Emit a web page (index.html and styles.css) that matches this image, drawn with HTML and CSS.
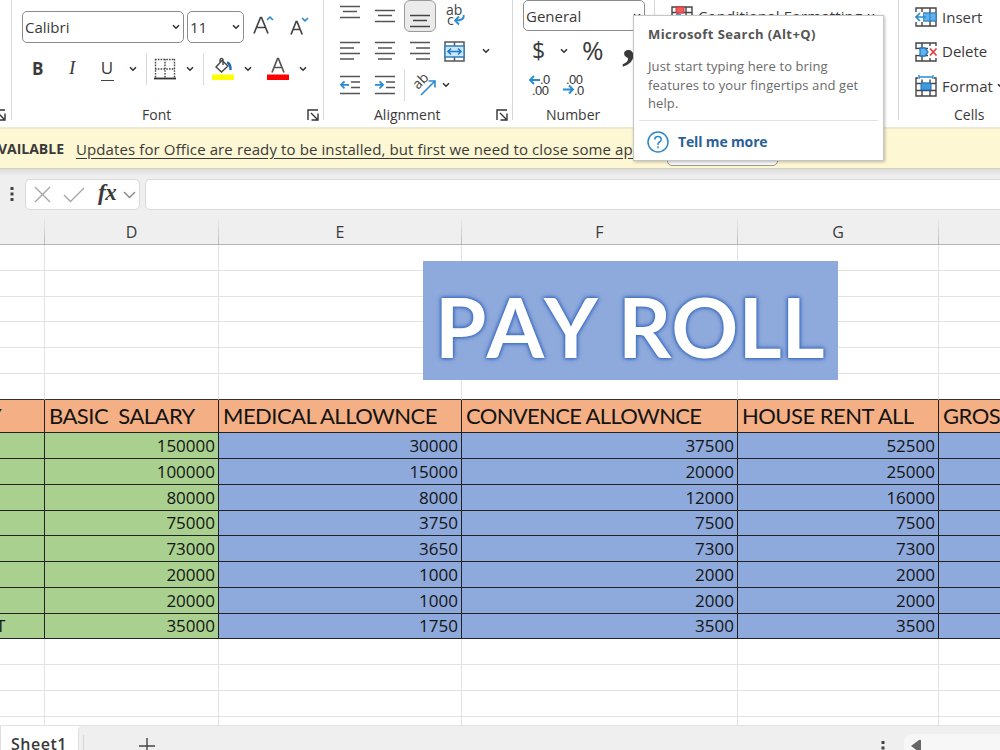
FILE: index.html
```html
<!DOCTYPE html>
<html lang="en">
<head>
<meta charset="utf-8">
<title>Payroll</title>
<link rel="stylesheet" href="styles.css">
</head>
<body>
<svg width="0" height="0" class="defs">
  <symbol id="chev" viewBox="0 0 8 6"><path d="M1 1.2 4 4.2 7 1.2" fill="none" stroke="#333" stroke-width="1.6"/></symbol>
  <symbol id="launch" viewBox="0 0 12 12"><path d="M1 11V1H11M4 4 10 10M11 4.500V11H4.500" fill="none" stroke="#333" stroke-width="1.400"/></symbol>
  <symbol id="cells" viewBox="0 0 22 20"><path d="M1 1H21V19H1ZM1 6.500H21M1 13.500H21M7 1V19M15 1V19" fill="#fff" stroke="#444" stroke-width="1.400"/></symbol>
</svg>
<div class="app">
  <header class="ribbon">
    <section class="group clip">
      <svg class="launcher"><use href="#launch"/></svg>
    </section>
    <section class="group font">
      <div class="row font-top">
        <div class="select family"><span>Calibri</span><svg class="chev"><use href="#chev"/></svg></div>
        <div class="select size"><span>11</span><svg class="chev"><use href="#chev"/></svg></div>
        <svg class="grow" width="22" height="20" viewBox="0 0 22 20"><path d="M1 18.500 7.500 2.500H8.500L15 18.500M3.500 12.500H12.500" fill="none" stroke="#444" stroke-width="1.700"/><path d="M14 5 17 2.200 20 5" fill="none" stroke="#2b8bd0" stroke-width="1.600"/></svg>
        <svg class="shrink" width="20" height="20" viewBox="0 0 20 20"><path d="M1 18.500 6.200 5.500H7L12.200 18.500M3 13.500H10.200" fill="none" stroke="#444" stroke-width="1.700"/><path d="M12 2 15 4.800 18 2" fill="none" stroke="#2b8bd0" stroke-width="1.600"/></svg>
      </div>
      <div class="row font-mid">
        <b class="bold">B</b>
        <i class="italic">I</i>
        <span class="under">U</span>
        <svg class="chev c1"><use href="#chev"/></svg>
        <span class="split s1"></span>
        <svg class="border-ic" width="22" height="22" viewBox="0 0 22 22"><path d="M1 1.500H21M1 11H21M1.500 1V20M11 1V20M20.500 1V20" fill="none" stroke="#444" stroke-width="1.400" stroke-dasharray="1.600 1.200"/><path d="M0 20.500H22" stroke="#333" stroke-width="1.800"/></svg>
        <svg class="chev c2"><use href="#chev"/></svg>
        <span class="split s2"></span>
        <svg class="fill-ic" width="22" height="24" viewBox="0 0 22 24"><path d="M10 3.500 16 9 9.500 15 4 10ZM8 6V3Q9 0 11 2.500V8" fill="none" stroke="#444" stroke-width="1.400"/><path d="M15 5.500Q18.800 6.500 18.500 13" fill="none" stroke="#1c6fb5" stroke-width="2.400"/><path d="M0 17.500H22V23H0Z" fill="#ff0"/></svg>
        <svg class="chev c3"><use href="#chev"/></svg>
        <svg class="color-ic" width="22" height="24" viewBox="0 0 22 24"><path d="M5 15.500 10.600 1.500H11.400L17 15.500M7 10.500H15" fill="none" stroke="#555" stroke-width="1.700"/><path d="M0 17.500H22V23H0Z" fill="#f00"/></svg>
        <svg class="chev c4"><use href="#chev"/></svg>
      </div>
      <div class="caption"><span class="cap-font">Font</span><svg class="launcher"><use href="#launch"/></svg></div>
    </section>
    <section class="group align">
      <div class="row align-top">
        <svg width="20" height="32" viewBox="0 0 20 32"><path d="M0 6.500H20M3 11.500H17M0 17.500H20" stroke="#555" stroke-width="1.500"/></svg>
        <svg width="20" height="32" viewBox="0 0 20 32"><path d="M0 10.500H20M3 15.500H17M0 21.500H20" stroke="#555" stroke-width="1.500"/></svg>
        <span class="pressed"><svg width="20" height="30" viewBox="0 0 20 30"><path d="M0 14.500H20M3 19.500H17M0 25.500H20" stroke="#444" stroke-width="1.500"/></svg></span>
        <svg class="wrap" width="22" height="26" viewBox="0 0 22 26"><text x="1" y="13" class="ab">ab</text><text x="2" y="23" class="ab">c</text><path d="M18.500 13Q20 18.500 10 18.500M14 14.500 10 18.500 14 22.500" fill="none" stroke="#2b8bd0" stroke-width="1.800"/></svg>
      </div>
      <div class="row align-mid">
        <svg width="20" height="20" viewBox="0 0 20 20"><path d="M0 1.500H20M0 7H14M0 12.500H20M0 18H14" stroke="#555" stroke-width="1.500"/></svg>
        <svg width="20" height="20" viewBox="0 0 20 20"><path d="M0 1.500H20M3 7H17M0 12.500H20M3 18H17" stroke="#555" stroke-width="1.500"/></svg>
        <svg width="20" height="20" viewBox="0 0 20 20"><path d="M0 1.500H20M6 7H20M0 12.500H20M6 18H20" stroke="#555" stroke-width="1.500"/></svg>
        <svg class="merge" width="21" height="21" viewBox="0 0 21 21"><path d="M1 1H20V20H1ZM10.500 1V5M10.500 16V20" fill="#fff" stroke="#555" stroke-width="1.500"/><path d="M1 5H20V16H1Z" fill="#cfe6f8" stroke="#2b7fc0" stroke-width="1.300"/><path d="M3.500 10.500H17.500M7 7.500 4 10.500 7 13.500M14 7.500 17 10.500 14 13.500" fill="none" stroke="#1f7cc4" stroke-width="1.600"/></svg>
        <svg class="chev"><use href="#chev"/></svg>
      </div>
      <div class="row align-low">
        <svg width="20" height="20" viewBox="0 0 20 20"><path d="M0 1.500H20M11 7H20M11 12.500H20M0 18.500H20" stroke="#555" stroke-width="1.500"/><path d="M1 9.800H9M4.500 6.300 1 9.800 4.500 13.300" fill="none" stroke="#2b8bd0" stroke-width="1.800"/></svg>
        <svg width="20" height="20" viewBox="0 0 20 20"><path d="M0 1.500H20M11 7H20M11 12.500H20M0 18.500H20" stroke="#555" stroke-width="1.500"/><path d="M0 9.800H8M4.500 6.300 8 9.800 4.500 13.300" fill="none" stroke="#2b8bd0" stroke-width="1.800"/></svg>
        <span class="split"></span>
        <svg class="orient" width="24" height="24" viewBox="0 0 24 24"><text x="5" y="17" class="ab" transform="rotate(-45 5 17)">ab</text><path d="M8 22 22 8M15.500 8H22V14.500" fill="none" stroke="#2b8bd0" stroke-width="1.600"/></svg>
        <svg class="chev"><use href="#chev"/></svg>
      </div>
      <div class="caption"><span class="cap-align">Alignment</span><svg class="launcher"><use href="#launch"/></svg></div>
    </section>
    <section class="group number">
      <div class="select general"><span>General</span><svg class="chev"><use href="#chev"/></svg></div>
      <div class="row num-mid">
        <span class="dollar">$</span><svg class="chev"><use href="#chev"/></svg><span class="percent">%</span><b class="comma">,</b>
      </div>
      <div class="row num-low">
        <svg width="22" height="23" viewBox="0 0 22 23"><text x="11" y="10" class="dec">.0</text><text x="3" y="21" class="dec">.00</text><path d="M1 6H11M5 2 1 6 5 10" fill="none" stroke="#2b8bd0" stroke-width="1.900"/></svg>
        <svg width="22" height="23" viewBox="0 0 22 23"><text x="3" y="10" class="dec">.00</text><text x="11" y="21" class="dec">.0</text><path d="M0 15.500H10M6 11.500 10 15.500 6 19.500" fill="none" stroke="#2b8bd0" stroke-width="1.900"/></svg>
      </div>
      <div class="caption"><span class="cap-num">Number</span></div>
    </section>
    <section class="group styles">
      <svg class="cf" width="22" height="20" viewBox="0 0 22 20"><use href="#cells"/><path d="M5 1H13V7H5Z" fill="#f25b5b" stroke="#d13438"/><path d="M5 8H10V13H5Z" fill="#4da0e0"/></svg>
      <span class="cf-text">Conditional Formatting</span><svg class="chev"><use href="#chev"/></svg>
    </section>
    <section class="group cellgroup">
      <div class="cmd"><svg width="22" height="20" viewBox="0 0 22 20"><use href="#cells"/><path d="M8 6H21V14H8Z" fill="#62b1ee" stroke="#1f7cc4"/><path d="M15 6V14" stroke="#1f7cc4"/><path d="M0 5H8V15H0Z" fill="#fff"/><path d="M1 10H11M5 6 1 10 5 14" fill="none" stroke="#2b8bd0" stroke-width="1.700"/></svg><span>Insert</span></div>
      <div class="cmd"><svg width="22" height="20" viewBox="0 0 22 20"><use href="#cells"/><path d="M13 4H22V16H13ZM0 7.300H4V12.700H0Z" fill="#fff"/><path d="M5 6H10L13 10 10 14H5Z" fill="#62b1ee" stroke="#1f7cc4" stroke-width="1.300"/><path d="M15 6.500 21.500 13.500M21.500 6.500 15 13.500" stroke="#e0393e" stroke-width="1.700"/></svg><span>Delete</span></div>
      <div class="cmd"><svg width="22" height="22" viewBox="0 0 22 22"><use href="#cells" y="2" height="20"/><path d="M3 0H19V4.500H3Z" fill="#fff"/><path d="M4 2H18M4 0V4M18 0V4" stroke="#2b8bd0" stroke-width="1.300"/><path d="M6 8H16V15H6Z" fill="#3f9be0" stroke="#1f6cb0"/></svg><span class="t-format">Format</span><svg class="chev"><use href="#chev"/></svg></div>
      <div class="caption"><span class="cap-cells">Cells</span></div>
    </section>
  </header>
  <div class="notice">
    <b>VAILABLE</b><span class="update">Updates for Office are ready to be installed, but first we need to close some app</span>
    <span class="notice-btn"></span>
  </div>
  <div class="formula">
    <svg class="dots" width="4" height="16" viewBox="0 0 4 16"><path d="M.5 1h3v3h-3zM.5 6.500h3v3h-3zM.5 12h3v3h-3z" fill="#444"/></svg>
    <div class="fx-box">
      <svg width="17" height="17" viewBox="0 0 17 17"><path d="M1 1 16 16M16 1 1 16" stroke="#a6a6a6" stroke-width="1.400"/></svg>
      <svg class="tick" width="22" height="16" viewBox="0 0 22 16"><path d="M1 8 7.500 14.500 21 1" fill="none" stroke="#a6a6a6" stroke-width="1.400"/></svg>
      <i class="fx">fx</i>
      <svg class="fxchev" width="13" height="8" viewBox="0 0 13 8"><path d="M1 1 6.500 6.500 12 1" fill="none" stroke="#888" stroke-width="1.400"/></svg>
    </div>
    <div class="fx-input"></div>
  </div>
  <div class="colhead"><span></span><span>D</span><span>E</span><span>F</span><span>G</span><span></span></div>
  <main class="sheet">
    <i></i><i></i><i></i><i></i><i></i><i class="last"></i>
    <i></i><i></i><i></i><i></i><i></i><i class="last"></i>
    <i></i><i></i><i></i><i></i><i></i><i class="last"></i>
    <i></i><i></i><i></i><i></i><i></i><i class="last"></i>
    <i></i><i></i><i></i><i></i><i></i><i class="last"></i>
    <i class="edge"></i><i class="edge"></i><i class="edge"></i><i class="edge"></i><i class="edge"></i><i class="edge last"></i>
    <div class="h first">Y</div><div class="h">BASIC&nbsp; SALARY</div><div class="h">MEDICAL ALLOWNCE</div><div class="h tight">CONVENCE ALLOWNCE</div><div class="h">HOUSE RENT ALL</div><div class="h last">GROSS</div>
    <div class="g"></div><div class="g">150000</div><div class="b">30000</div><div class="b">37500</div><div class="b">52500</div><div class="b last"></div>
    <div class="g"></div><div class="g">100000</div><div class="b">15000</div><div class="b">20000</div><div class="b">25000</div><div class="b last"></div>
    <div class="g"></div><div class="g">80000</div><div class="b">8000</div><div class="b">12000</div><div class="b">16000</div><div class="b last"></div>
    <div class="g"></div><div class="g">75000</div><div class="b">3750</div><div class="b">7500</div><div class="b">7500</div><div class="b last"></div>
    <div class="g"></div><div class="g">73000</div><div class="b">3650</div><div class="b">7300</div><div class="b">7300</div><div class="b last"></div>
    <div class="g"></div><div class="g">20000</div><div class="b">1000</div><div class="b">2000</div><div class="b">2000</div><div class="b last"></div>
    <div class="g"></div><div class="g">20000</div><div class="b">1000</div><div class="b">2000</div><div class="b">2000</div><div class="b last"></div>
    <div class="g left">T</div><div class="g">35000</div><div class="b">1750</div><div class="b">3500</div><div class="b">3500</div><div class="b last"></div>
    <i></i><i></i><i></i><i></i><i></i><i class="last"></i>
    <i></i><i></i><i></i><i></i><i></i><i class="last"></i>
    <i></i><i></i><i></i><i></i><i></i><i class="last"></i>
    <i></i><i></i><i></i><i></i><i></i><i class="last"></i>
    <div class="wordart">PAY ROLL</div>
  </main>
  <footer class="tabs">
    <div class="tab">Sheet1</div>
    <div class="strip">
      <span class="tab-sep"></span>
      <svg class="plus" width="16" height="16" viewBox="0 0 16 16"><path d="M8 0V16M0 8H16" stroke="#444" stroke-width="1.400"/></svg>
      <svg class="tabdots" width="4" height="16" viewBox="0 0 4 16"><path d="M.5 1h3v3h-3zM.5 6.500h3v3h-3zM.5 12h3v3h-3z" fill="#444"/></svg>
      <div class="scroll"><svg width="11" height="14" viewBox="0 0 11 14"><path d="M0 7 8 1Q10 0 10 2V12Q10 14 8 13Z" fill="#666"/></svg></div>
    </div>
  </footer>
  <aside class="tip">
    <b class="tip-title">Microsoft Search (Alt+Q)</b>
    <p>Just start typing here to bring<br>features to your fingertips and get<br>help.</p>
    <div class="more"><svg width="22" height="22" viewBox="0 0 22 22"><circle cx="11" cy="11" r="10" fill="none" stroke="#2b88c8" stroke-width="1.500"/><path d="M7.800 8.500Q7.800 5.500 11 5.500T14.200 8.300Q14.200 10 12.500 11T11 14M11 15.300V17.200" fill="none" stroke="#2b88c8" stroke-width="1.500"/></svg><b>Tell me more</b></div>
  </aside>
</div>
</body>
</html>
```
FILE: styles.css
```css
* { box-sizing: border-box; }
body { margin: 0; }
.defs { display: block; position: absolute; }
.app {
  position: relative; width: 1000px; height: 750px; overflow: hidden;
  display: flex; flex-direction: column; background: #fff;
  font-family: "Open Sans", "Noto Sans", sans-serif; font-size: 15px; color: #3a3a3a;
  white-space: nowrap;
}
svg { flex: none; display: block; overflow: visible; }
.chev { width: 8px; height: 6px; }
.launcher { width: 12px; height: 12px; }
.ab { font: 14px "Open Sans", sans-serif; fill: #444; }
.dec { font: 13px "Liberation Sans", sans-serif; letter-spacing: -0.6px; fill: #333; }

/* Ribbon */
.ribbon { height: 127px; flex: none; display: flex; overflow: hidden; }
.group { position: relative; flex: none; height: 127px; display: flex; flex-direction: column; }
.group::after { content: ""; position: absolute; right: 0; top: 0; width: 1px; height: 120px; background: #d8d8d8; }
.clip { width: 12px; padding-top: 109px; }
.clip .launcher { margin-left: -6px; }
.row { display: flex; align-items: center; flex: none; }
.select {
  display: flex; align-items: center; justify-content: space-between;
  height: 32px; border: 1px solid #8c8c8c; border-radius: 5px; padding: 0 3px 0 2px; flex: none;
}
.select span { padding-bottom: 1px; }
.general span { padding-bottom: 0; }
.caption { display: flex; height: 20px; align-items: center; margin-top: auto; margin-bottom: 2px; font-size: 14px; flex: none; }
.caption span { padding-bottom: 2px; }

.font { width: 312px; padding: 11px 0 0 10px; }
.family { width: 162px; }
.size { width: 57px; margin-left: 3px; }
.grow { margin: -4px 0 0 9px; }
.shrink { margin: -2px 0 0 15px; }
.font-mid { height: 32px; margin-top: 10px; }
.bold { width: 22px; margin: -2px 0 0 10px; font-size: 17px; }
.italic { width: 22px; margin: -2px 0 0 15px; font: italic 19px "Liberation Serif", serif; }
.under { width: 14px; margin-left: 9px; font-size: 17px; height: 24px; line-height: 22px; text-align: center; position: relative; }
.under::after { content: ""; position: absolute; left: 1px; right: 0; bottom: 0; height: 1px; background: #444; }
.split { width: 1px; height: 32px; background: #d8d8d8; }
.c1 { margin-left: 15px; }
.s1 { margin-left: 9px; }
.border-ic { margin-left: 7px; }
.c2 { margin-left: 10px; }
.s2 { margin-left: 9px; }
.fill-ic { margin-left: 8px; }
.c3 { margin-left: 10px; }
.color-ic { margin-left: 15px; }
.c4 { margin-left: 10px; }
.cap-font { margin-left: 120px; width: 165px; }

.align { width: 189px; padding-left: 16px; }
.align-top { height: 33px; gap: 15px; align-items: flex-start; }
.pressed { width: 32px; height: 32px; margin-left: -6px; border: 1px solid #9a9a9a; border-radius: 6px; background: #ebebeb; display: flex; justify-content: center; }
.wrap { margin: 2px 0 0 -6px; }
.align-mid { height: 20px; margin-top: 8px; gap: 15px; }
.align-mid .merge { margin-left: -1px; }
.align-mid .chev { margin-left: 2px; }
.align-low { height: 32px; margin-top: 8px; }
.align-low svg:nth-child(2) { margin-left: 15px; }
.align-low .split { margin-left: 9px; }
.orient { margin-left: 8px; }
.align-low .chev { margin-left: 5px; }
.cap-align { margin-left: 34px; width: 122px; }

.number { width: 142px; padding-left: 10px; }
.general { width: 122px; height: 31px; margin-top: 0; padding-right: 3px; }
.num-mid { height: 36px; font-size: 23px; margin-top: 2px; }
.dollar { width: 16px; margin: -2px 0 0 9px; }
.num-mid .chev { margin-left: 12px; }
.percent { margin: -2px 0 0 14px; width: 28px; font-size: 26px; }
.comma { margin: -22px 0 0 12px; font: bold 54px/36px "Liberation Serif", serif; }
.num-low { gap: 12px; margin: 5px 0 0 6px; }
.cap-num { margin-left: 23px; }

.styles { width: 244px; flex-direction: row; padding: 6px 0 0 16px; }
.cf-text { margin-left: 5px; line-height: 21px; letter-spacing: .15px; }
.styles .chev { margin: 7px 0 0 5px; }
.cellgroup { width: 101px; padding-left: 16px; }
.cellgroup::after { display: none; }
.cmd { display: flex; align-items: center; gap: 5px; height: 34.500px; flex: none; }
.cmd span { padding-bottom: 1px; }
.t-format { letter-spacing: .1px; }
.cmd .chev { margin-left: -1px; }
.cap-cells { margin-left: 39px; }

/* Update notice */
.notice { position: relative; height: 42px; flex: none; display: flex; align-items: center; background: #fdf7d3; border-top: 2px solid #ecead2; border-bottom: 1px solid #d5d2bb; }
.notice b { display: flex; justify-content: flex-end; width: 64px; margin-right: 12px; font-size: 14px; font-weight: 700; letter-spacing: 0; flex: none; }
.update { letter-spacing: .11px; text-decoration: underline; text-underline-offset: 3px; }
.notice-btn { position: absolute; left: 667px; top: 6px; width: 111px; height: 31px; border: 1px solid #999; border-radius: 5px; background: #fafafa; }

/* Formula bar */
.formula { height: 48px; flex: none; display: flex; align-items: flex-start; padding: 10px 0 0 10px; background: linear-gradient(#dcdcdc, #efefef 7px); }
.dots { margin-top: 7px; }
.fx-box { display: flex; flex: none; align-items: center; margin-left: 11px; width: 115px; height: 31px; padding-left: 8px; border: 1px solid #dadada; border-radius: 5px; background: #fff; }
.tick { margin-left: 12px; }
.fx { margin: -3px 0 0 13px; width: 24px; font: italic bold 23px "Liberation Serif", serif; letter-spacing: -.5px; }
.fxchev { margin-left: 1px; }
.fx-input { margin-left: 5px; width: 900px; height: 31px; border: 1px solid #dadada; border-radius: 5px; background: #fff; flex: none; }

/* Sheet */
.colhead, .sheet { display: grid; grid-template-columns: 45px 174px 243px 276px 201px 61px; flex: none; }
.colhead { height: 28px; background: #efefef; border-bottom: 1px solid #b5b5b5; }
.colhead span { display: flex; justify-content: center; align-items: center; font-size: 16px; padding-top: 3px; border-right: 1px solid; border-image: linear-gradient(#efefef, #bbb) 1; }
.colhead span:last-child { border: 0; }
.sheet { position: relative; height: 481px; overflow: hidden; grid-template-rows: 26px 26px 25px 26px 26px 26px 33px 26px 26px 26px 25px 26px 26px 26px 25px 26px 26px 26px 9px; }
.sheet > i { border-right: 1px solid #e1e3e3; border-bottom: 1px solid #e1e3e3; }
.sheet > i.edge { border-bottom-color: #333; }
.h, .g, .b { display: flex; align-items: center; border-right: 1px solid #222; border-bottom: 1px solid #222; overflow: hidden; color: #141414; }
.sheet > .last { border-right: 0; }
.h { background: #f4b084; font: 22px "Lato", sans-serif; letter-spacing: -.52px; padding: 0 0 2px 4px; }
.tight { letter-spacing: -.66px; }
.first { padding-left: 0; text-indent: -12px; }
.g, .b { justify-content: flex-end; padding-right: 3px; font-size: 17px; line-height: 24px; }
.g { background: #a9d08e; }
.b { background: #8ea9db; }
.left { justify-content: flex-start; text-indent: -4px; }
.wordart { position: absolute; left: 423px; top: 16px; width: 415px; height: 119px; background: #8ea9db; color: #fff; font: bold 83px/130px "Lato", sans-serif; font-kerning: none; padding-left: 12px; text-shadow: 0 0 2px #4472c4, 0 0 3px #4472c4, 0 0 4px #4472c4, 0 0 5px #4472c4; }

/* Sheet tabs */
.tabs { height: 24px; display: flex; flex: none; background: #fff; }
.tab { width: 78px; padding: 6px 0 0 10px; font-size: 16px; font-weight: 600; letter-spacing: .5px; line-height: 24px; border-left: 1px solid #ddd; }
.strip { flex: 1; display: flex; background: #efefef; border-radius: 5px 0 0 0; border-left: 1px solid #ddd; }
.tab-sep { width: 1px; margin: 9px 0 0 4px; background: #d6d6d6; }
.plus { margin: 12px 0 0 55px; }
.tabdots { margin: 14px 0 0 726px; }
.scroll { flex: 1; margin: 8px 0 0 19px; padding: 5px 0 0 7px; background: #f7f7f7; border-radius: 8px 0 0 0; }

/* Search tooltip */
.tip { position: absolute; left: 633px; top: 15px; width: 251px; height: 146px; background: #fff; border: 1px solid #c6c6c6; box-shadow: 1px 1px 3px rgba(0, 0, 0, .25); display: flex; flex-direction: column; color: #6a6a6a; }
.tip-title { margin: 8px 0 0 14px; font-size: 13px; letter-spacing: .42px; line-height: 20px; color: #555; }
.tip p { margin: 13px 0 0 14px; font-size: 13px; letter-spacing: .1px; line-height: 18.700px; }
.more { margin: 7px 5px 0; padding: 10px 0 0 8px; border-top: 1px solid #e1e1e1; display: flex; align-items: center; gap: 9px; color: #2b5f9a; font-size: 14px; letter-spacing: -.15px; line-height: 20px; }
```
